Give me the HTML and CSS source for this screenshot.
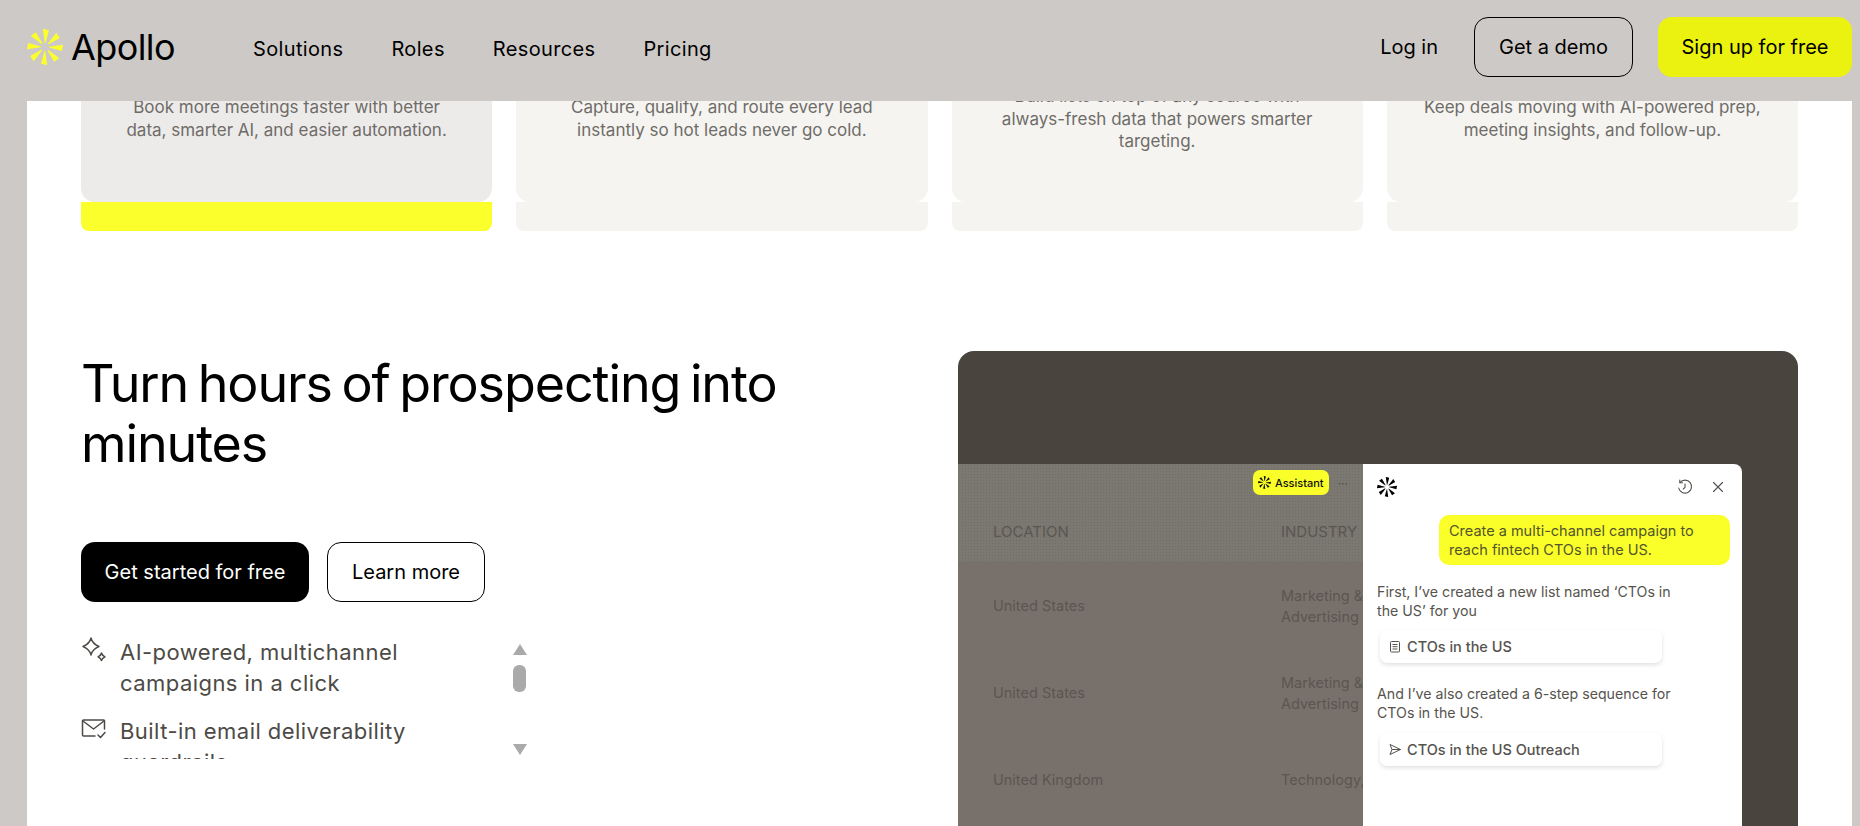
FILE: index.html
```html
<!DOCTYPE html>
<html lang="en">
<head>
    <meta charset="UTF-8">
    <meta name="viewport" content="width=device-width, initial-scale=1.0">
    <title>Apollo</title>
    <link rel="stylesheet" href="styles.css">
</head>
<body>
    <svg class="defs" width="0" height="0">
        <defs>
            <symbol id="spark" viewBox="-18 -18 36 36">
                <g id="spokes">
                    <polygon points="-0.4,-4 0.4,-4 3.400,-17 -2.800,-18" transform="rotate(2)"/>
                    <polygon points="-0.4,-4 0.4,-4 3.400,-17 -2.800,-18" transform="rotate(47)"/>
                    <polygon points="-0.4,-4 0.4,-4 3.400,-17 -2.800,-18" transform="rotate(92)"/>
                    <polygon points="-0.4,-4 0.4,-4 3.400,-17 -2.800,-18" transform="rotate(137)"/>
                    <polygon points="-0.4,-4 0.4,-4 3.400,-17 -2.800,-18" transform="rotate(182)"/>
                    <polygon points="-0.4,-4 0.4,-4 3.400,-17 -2.800,-18" transform="rotate(227)"/>
                    <polygon points="-0.4,-4 0.4,-4 3.400,-17 -2.800,-18" transform="rotate(272)"/>
                    <polygon points="-0.4,-4 0.4,-4 3.400,-17 -2.800,-18" transform="rotate(317)"/>
                </g>
            </symbol>
        </defs>
    </svg>

    <header class="site-header">
        <a class="brand" href="#">
            <svg class="brand-mark" width="36" height="36"><use href="#spark"/></svg>
            <span>Apollo</span>
        </a>
        <nav class="main-nav">
            <a href="#">Solutions</a>
            <a href="#">Roles</a>
            <a href="#">Resources</a>
            <a href="#">Pricing</a>
        </nav>
        <div class="header-actions">
            <a class="login" href="#">Log in</a>
            <a class="btn btn-ghost" href="#">Get a demo</a>
            <a class="btn btn-signup" href="#">Sign up for free</a>
        </div>
    </header>

    <main class="page">
        <div class="cards">
            <div class="card active">
                <div class="card-body"><p>Book more meetings faster with better data, smarter AI, and easier automation.</p></div>
                <div class="card-bar"></div>
            </div>
            <div class="card">
                <div class="card-body"><p>Capture, qualify, and route every lead instantly so hot leads never go cold.</p></div>
                <div class="card-bar"></div>
            </div>
            <div class="card">
                <div class="card-body"><p>Build lists on top of any source with always-fresh data that powers smarter targeting.</p></div>
                <div class="card-bar"></div>
            </div>
            <div class="card">
                <div class="card-body"><p>Keep deals moving with AI-powered prep, meeting insights, and follow-up.</p></div>
                <div class="card-bar"></div>
            </div>
        </div>

        <section class="feature">
            <div class="feature-copy">
                <h1>Turn hours of prospecting into minutes</h1>
                <div class="cta-row">
                    <a class="btn btn-dark" href="#">Get started for free</a>
                    <a class="btn btn-outline" href="#">Learn more</a>
                </div>
                <div class="points-wrap">
                    <ul class="points">
                        <li>
                            <svg width="26" height="26" viewBox="0 0 26 26" fill="none" stroke="#4d4a45" stroke-width="1.400" stroke-linejoin="round">
                                <path d="M10 1c1 4.300 3.200 6.500 8 8.500-4.800 2-7 4.200-8 8.500-1-4.300-3.200-6.500-8-8.500 4.800-2 7-4.200 8-8.500z"/>
                                <path d="M20.500 16c.4 1.900 1.300 2.800 3.500 3.800-2.200 1-3.100 1.900-3.500 3.800-.4-1.900-1.300-2.800-3.500-3.800 2.200-1 3.100-1.900 3.500-3.800z"/>
                            </svg>
                            <span>AI-powered, multichannel campaigns in a click</span>
                        </li>
                        <li>
                            <svg width="26" height="26" viewBox="0 0 26 26" fill="none" stroke="#4d4a45" stroke-width="1.500" stroke-linejoin="round" stroke-linecap="round">
                                <path d="M14 20H2.500a1 1 0 0 1-1-1V5a1 1 0 0 1 1-1h20a1 1 0 0 1 1 1v8"/>
                                <path d="M2 5l10.500 8L23 5"/>
                                <path d="M17 19l2.500 2.500 4.500-5"/>
                            </svg>
                            <span>Built-in email deliverability guardrails</span>
                        </li>
                    </ul>
                    <div class="scroller">
                        <span class="arrow-up"></span>
                        <span class="thumb"></span>
                        <span class="arrow-down"></span>
                    </div>
                </div>
            </div>

            <div class="preview">
                <div class="app">
                    <div class="app-table">
                        <div class="table-top">
                            <div class="toolbar">
                                <span class="pill"><svg width="13" height="13"><use href="#spark"/></svg>Assistant</span>
                                <span class="more">···</span>
                            </div>
                            <div class="row head">
                                <span>LOCATION</span>
                                <span>INDUSTRY</span>
                            </div>
                        </div>
                        <div class="row">
                            <span>United States</span>
                            <span>Marketing &amp;<br>Advertising</span>
                        </div>
                        <div class="row">
                            <span>United States</span>
                            <span>Marketing &amp;<br>Advertising</span>
                        </div>
                        <div class="row">
                            <span>United Kingdom</span>
                            <span>Technology, Information</span>
                        </div>
                    </div>
                    <aside class="chat">
                        <div class="chat-head">
                            <svg class="chat-logo" width="20" height="20"><use href="#spark"/></svg>
                            <svg width="16" height="16" viewBox="0 0 16 16" fill="none" stroke="#55524d" stroke-width="1.100" stroke-linecap="round" stroke-linejoin="round">
                                <path d="M3 3.500A6.500 6.500 0 1 1 1.700 9"/>
                                <path d="M2.800 1v2.800h2.800"/>
                                <path d="M8 5v3.400L6.300 10"/>
                            </svg>
                            <svg class="chat-close" width="12" height="12" viewBox="0 0 12 12" fill="none" stroke="#55524d" stroke-width="1.100" stroke-linecap="round">
                                <path d="M1.500 1.500l9 9M10.500 1.500l-9 9"/>
                            </svg>
                        </div>
                        <div class="bubble">Create a multi-channel campaign to reach fintech CTOs in the US.</div>
                        <p class="reply">First, I’ve created a new list named ‘CTOs in the US’ for you</p>
                        <div class="chip">
                            <svg width="12" height="13" viewBox="0 0 12 13" fill="none" stroke="#55524d" stroke-width="1">
                                <rect x="1.500" y="1.500" width="9" height="10.500" rx="1"/>
                                <path d="M3.500 4.500h5M3.500 6.700h5M3.500 9h5"/>
                            </svg>
                            CTOs in the US
                        </div>
                        <p class="reply second">And I’ve also created a 6-step sequence for CTOs in the US.</p>
                        <div class="chip">
                            <svg width="12" height="13" viewBox="0 0 12 13" fill="none" stroke="#55524d" stroke-width="1" stroke-linejoin="round">
                                <path d="M1 1.500l10.500 5-10.500 5 2-5-2-5zM3 6.500h8.500"/>
                            </svg>
                            CTOs in the US Outreach
                        </div>
                    </aside>
                </div>
            </div>
        </section>
    </main>
</body>
</html>
```

FILE: styles.css
```css
* {
    box-sizing: border-box;
}
html, body {
    height: 826px;
    overflow: hidden;
}
body {
    margin: 0;
    background: #cdc9c6;
    font-family: Inter, "Liberation Sans", sans-serif;
    color: #000;
}
a {
    color: inherit;
    text-decoration: none;
}
.defs {
    display: block;
    height: 0;
}

/* top bar sits over the scrolled page */
.site-header {
    position: fixed;
    top: 0;
    left: 0;
    right: 0;
    z-index: 5;
    height: 101px;
    background: #cdc9c6;
    display: flex;
    align-items: center;
    padding: 0 8px 4px 27px;
}
.brand {
    display: flex;
    align-items: center;
    gap: 8px;
    font-size: 36px;
    letter-spacing: -0.600px;
    width: 226px;
    margin-top: -3px;
}
.brand span {
    margin-top: -1px;
}
.brand-mark {
    fill: #fbff2b;
}
.main-nav {
    display: flex;
    gap: 48px;
    font-size: 20px;
    letter-spacing: 0.350px;
}
.header-actions {
    margin-left: auto;
    display: flex;
    align-items: center;
    gap: 25px;
    font-size: 20px;
    margin-top: -4px;
}
.btn {
    display: flex;
    align-items: center;
    justify-content: center;
    height: 60px;
    border-radius: 14px;
    font-size: 20px;
}
.btn-ghost {
    width: 159px;
    border: 1px solid #000;
}
.btn-signup {
    width: 194px;
    background: #ecf20f;
}
.login {
    margin-right: 11px;
}

.page {
    margin: 0 8px 0 27px;
    height: 826px;
    overflow: hidden;
    background: #fff;
    padding: 0 54px;
}

.cards {
    display: grid;
    grid-template-columns: repeat(4, 1fr);
    gap: 24px;
}
.card-body {
    height: 202px;
    padding: 36px 36px 0;
    background: #f5f4f1;
    border-radius: 0 0 14px 14px;
    display: flex;
    align-items: center;
    text-align: center;
}
.card-body p {
    margin: 0;
    width: 100%;
    font-size: 17px;
    line-height: 22.700px;
    color: #6f6c68;
}
.card-bar {
    height: 29px;
    background: #f5f4f1;
    border-radius: 0 0 8px 8px;
}
.card.active .card-body {
    background: #ecebea;
}
.card.active .card-bar {
    background: #fbff2b;
}

.feature {
    margin-top: 120px;
    display: grid;
    grid-template-columns: 1fr 840px;
}
.feature-copy h1 {
    margin: 3px 0 0;
    width: 700px;
    font-size: 52px;
    line-height: 60px;
    font-weight: 400;
    letter-spacing: -1.100px;
    word-spacing: -4px;
}
.cta-row {
    display: flex;
    gap: 18px;
    margin-top: 68px;
}
.btn-dark {
    width: 228px;
    background: #000;
    color: #fff;
}
.btn-outline {
    width: 158px;
    border: 1px solid #000;
}
.points-wrap {
    display: flex;
    margin-top: 27px;
    height: 130px;
}
.points {
    list-style: none;
    margin: 0;
    padding: 8px 0 0;
    width: 432px;
    overflow: hidden;
}
.points li {
    display: flex;
    gap: 13px;
    margin-bottom: 17px;
    font-size: 22px;
    line-height: 31px;
    letter-spacing: 0.450px;
    color: #4d4a45;
}
.points svg {
    flex: none;
}
.points span {
    width: 300px;
}
.scroller {
    width: 13px;
    display: flex;
    flex-direction: column;
    align-items: center;
    padding-top: 15px;
}
.arrow-up {
    border: 7px solid transparent;
    border-top: 0;
    border-bottom: 11px solid #aaa;
}
.thumb {
    width: 13px;
    height: 27px;
    margin-top: 10px;
    border-radius: 6px;
    background: #aaa;
}
.arrow-down {
    margin-top: 52px;
    border: 7px solid transparent;
    border-bottom: 0;
    border-top: 11px solid #aaa;
}

.preview {
    height: 560px;
    background: #49443d;
    border-radius: 16px;
    padding: 113px 56px 0 0;
    overflow: hidden;
}
.app {
    display: flex;
    height: 100%;
    overflow: hidden;
    border-radius: 0 8px 0 0;
}
.app-table {
    width: 405px;
    background: #78716b;
    color: #5a5650;
    font-size: 14.500px;
    overflow: hidden;
}
.table-top {
    height: 98px;
    background-color: #7a7871;
    background-image: radial-gradient(#6f6d66 0.6px, transparent 0.7px);
    background-size: 3px 3px;
}
.toolbar {
    height: 36px;
    padding-top: 7px;
    display: flex;
    justify-content: flex-end;
    align-items: flex-start;
    gap: 9px;
    padding-right: 15px;
}
.pill {
    display: flex;
    align-items: center;
    gap: 4px;
    height: 25px;
    padding: 0 5px;
    margin-top: -1px;
    border-radius: 7px;
    background: #faff2a;
    color: #111;
    font-size: 11px;
    font-weight: 500;
    fill: #111;
}
.more {
    font-size: 12px;
    line-height: 25px;
    color: #4f4b46;
}
.row {
    display: grid;
    grid-template-columns: 288px 200px;
    align-items: center;
    height: 87px;
    padding-left: 35px;
    line-height: 21px;
    white-space: nowrap;
}
.row.head {
    height: 63px;
    font-size: 15px;
}
.chat {
    width: 379px;
    background: #fff;
    padding: 0 12px 0 14px;
    display: flex;
    flex-direction: column;
    color: #56534e;
    font-size: 14.200px;
}
.chat-head {
    height: 46px;
    margin-bottom: 5px;
    display: flex;
    align-items: center;
    gap: 19px;
    justify-content: flex-end;
    padding-right: 6px;
}
.chat-logo {
    margin-right: auto;
    fill: #000;
}
.bubble {
    align-self: flex-end;
    width: 291px;
    height: 50px;
    padding: 6px 10px;
    font-size: 14.500px;
    line-height: 19px;
    background: #faff2a;
    border-radius: 10px;
    color: #54552a;
}
.reply {
    margin: 18px 0 10px;
    line-height: 18.700px;
    width: 310px;
}
.reply.second {
    margin-top: 22px;
}
.chip {
    margin-left: 3px;
    width: 282px;
    height: 33px;
    display: flex;
    align-items: center;
    gap: 6px;
    padding-left: 9px;
    border-radius: 7px;
    font-weight: 500;
    font-size: 14.500px;
    box-shadow: 0 2px 4px rgba(0, 0, 0, 0.12);
}
```
